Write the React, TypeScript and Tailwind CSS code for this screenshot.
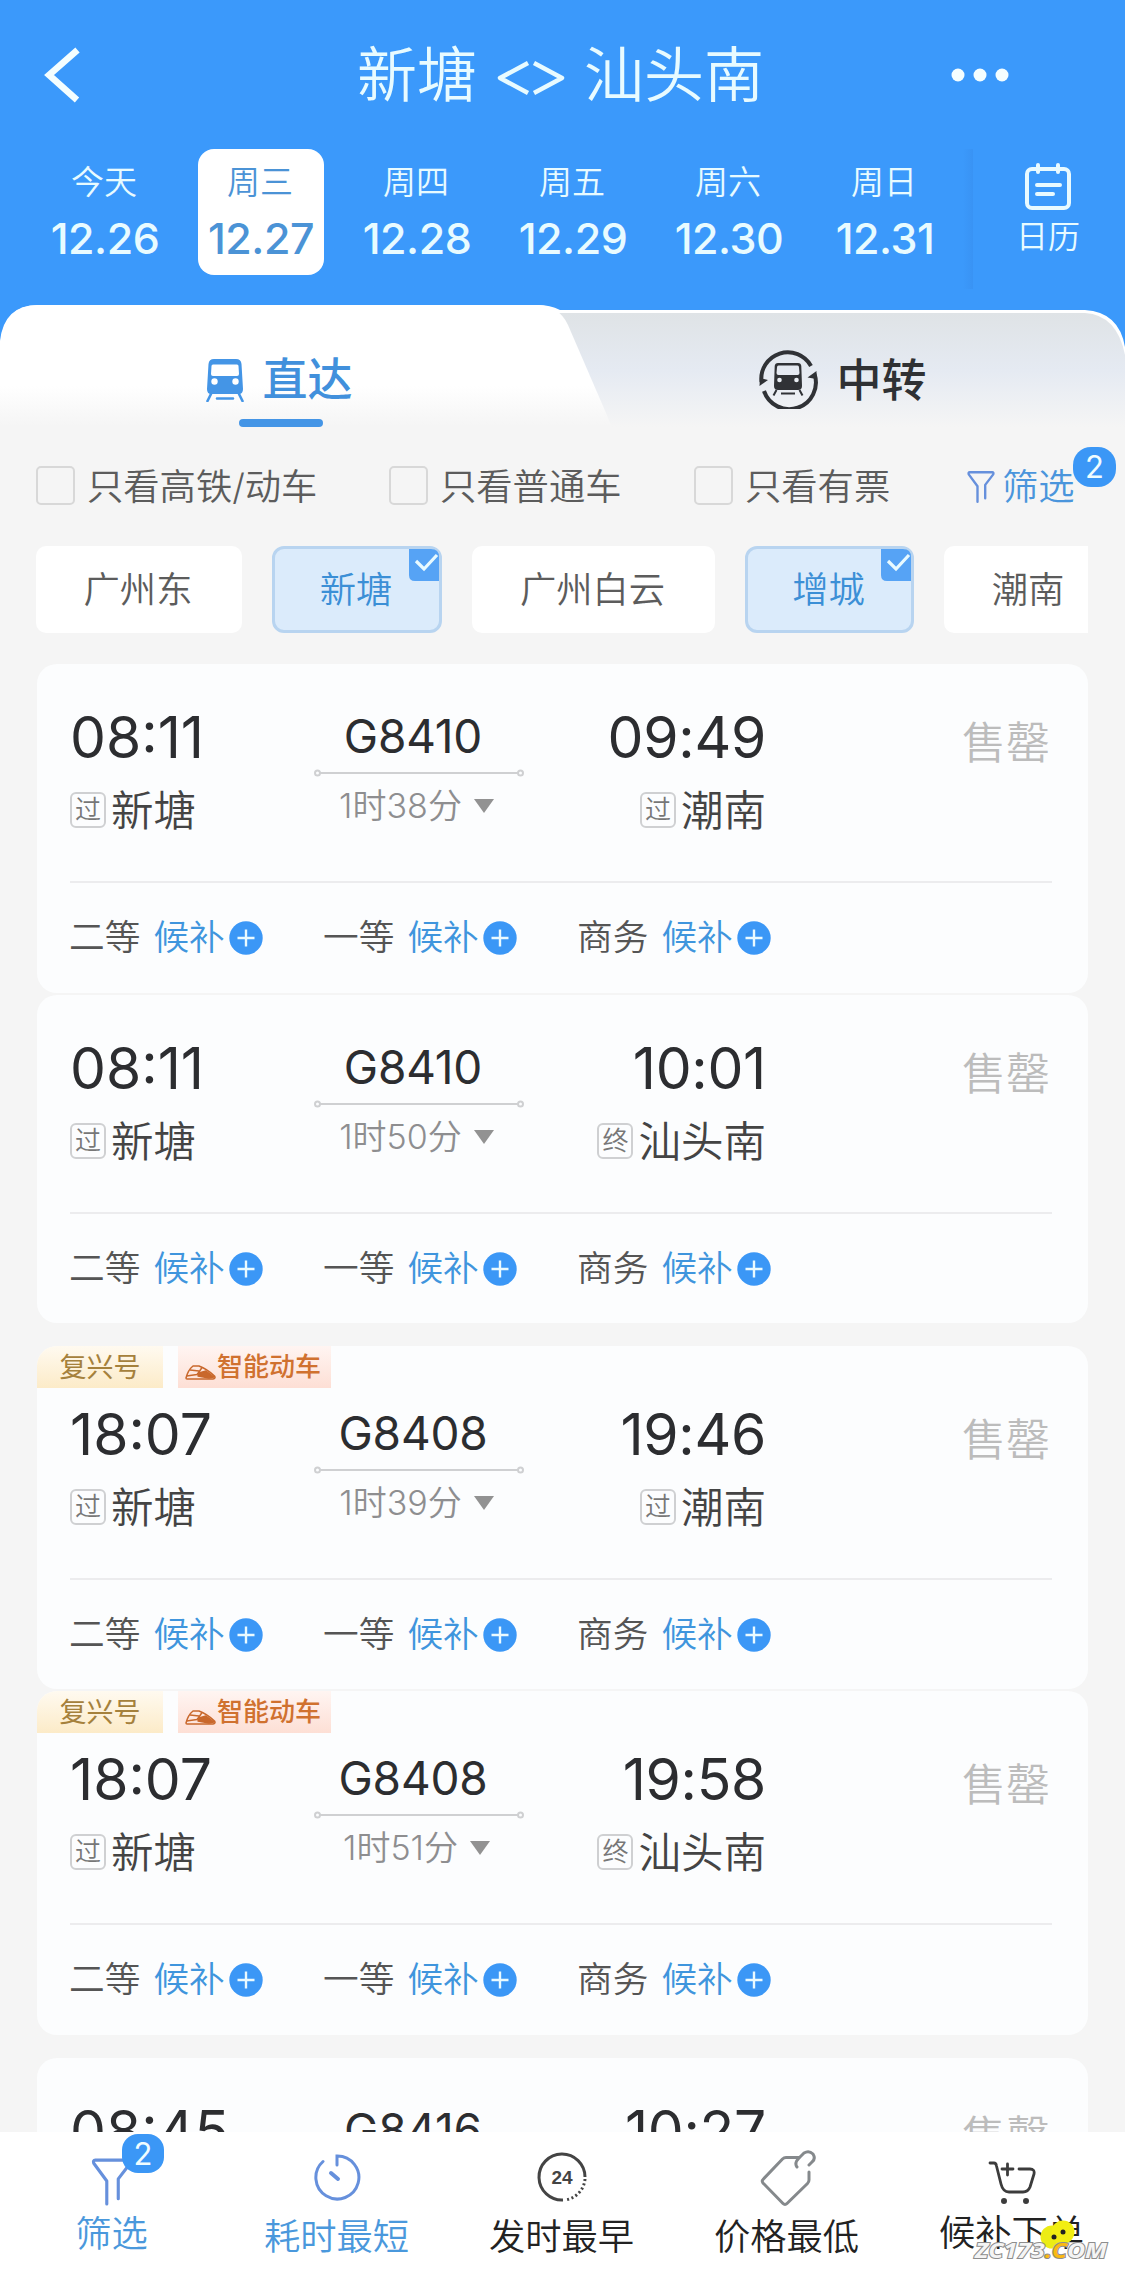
import type React from "react"

interface Day {
  label: string
  date: string
}

interface Train {
  depart: string
  arrive: string
  from: string
  to: string
  toBadge: string
  code: string
  duration: string
  tags?: boolean
  className: string
}

const days: Day[] = [
  { label: "今天", date: "12.26" },
  { label: "周三", date: "12.27" },
  { label: "周四", date: "12.28" },
  { label: "周五", date: "12.29" },
  { label: "周六", date: "12.30" },
  { label: "周日", date: "12.31" },
]

const trains: Train[] = [
  { depart: "08:11", arrive: "09:49", from: "新塘", to: "潮南", toBadge: "过", code: "G8410", duration: "1时38分", className: "h-[329px]" },
  { depart: "08:11", arrive: "10:01", from: "新塘", to: "汕头南", toBadge: "终", code: "G8410", duration: "1时50分", className: "mt-[2px] h-[328px]" },
  { depart: "18:07", arrive: "19:46", from: "新塘", to: "潮南", toBadge: "过", code: "G8408", duration: "1时39分", tags: true, className: "mt-[23px] h-[343px]" },
  { depart: "18:07", arrive: "19:58", from: "新塘", to: "汕头南", toBadge: "终", code: "G8408", duration: "1时51分", tags: true, className: "mt-[2px] h-[344px]" },
  { depart: "08:45", arrive: "10:27", from: "新塘", to: "潮南", toBadge: "过", code: "G8416", duration: "1时42分", className: "mt-[23px] h-[329px]" },
]

const seats = ["二等", "一等", "商务"]

const FunnelIcon: React.FC<{ className: string; strokeWidth: number }> = ({ className, strokeWidth }) => (
  <svg viewBox="0 0 40 46" className={className} fill="none" stroke="#6690dc" strokeWidth={strokeWidth} strokeLinecap="round" strokeLinejoin="round">
    <path d="M15 44V22L2.500 5Q1.500 2 4 2H36Q38.500 2 37.500 5L26 20V39" />
  </svg>
)

const TrainIcon: React.FC = () => (
  <svg viewBox="0 0 38 43" className="h-[43px] w-[38px]">
    <path fill="#4495e6" fillRule="evenodd" d="M8 0H30Q35 0 35.500 5L37 30Q37 35 33 35H5Q1 35 1 30L2.500 5Q3 0 8 0ZM7 5.500Q5.500 5.500 5.500 7L5 15Q5 17 7 17H31Q33 17 33 15L32.500 7Q32.500 5.500 31 5.500Z" />
    <circle cx="8.500" cy="22.500" r="3.200" fill="#fff" />
    <circle cx="29.500" cy="22.500" r="3.200" fill="#fff" />
    <path d="M5 35L1.500 42M33 35L36.500 42M11 39.500H27" stroke="#4495e6" strokeWidth="2.600" strokeLinecap="round" />
  </svg>
)

const TransferIcon: React.FC = () => (
  <svg viewBox="0 0 60 60" className="h-[60px] w-[60px]">
    <g fill="none" stroke="#303236" strokeWidth="4">
      <path d="M3.500 33A26.500 26.500 0 0 1 53 17" />
      <path d="M56.500 25A26.500 26.500 0 0 1 6 42" />
    </g>
    <path d="M2 29L10 31L1.500 37ZM58.500 22V30L49.500 28.500Z" fill="#303236" />
    <path fill="#303236" fillRule="evenodd" d="M20 14H40Q43 14 43.300 17L44 37Q44 41 40 41H20Q16 41 16 37L16.700 17Q17 14 20 14ZM20.500 16.500Q19 16.500 19 18.500L18.500 24Q18.500 26 20.500 26H39.500Q41.500 26 41.500 24L41 18.500Q41 16.500 39.500 16.500Z" />
    <circle cx="21.500" cy="31" r="2.300" fill="#e9edf3" />
    <circle cx="38.500" cy="31" r="2.300" fill="#e9edf3" />
    <path d="M18.500 41L15.500 46.500M41.500 41L44.500 46.500M23 44.500H37" stroke="#303236" strokeWidth="2" />
  </svg>
)

const PlusIcon: React.FC = () => (
  <svg viewBox="0 0 34 34" className="ml-[4px] h-[34px] w-[34px]">
    <circle cx="17" cy="17" r="16.700" fill="#3b97f6" />
    <path d="M8.500 17H25.500M17 8.500V25.500" stroke="#eafaff" strokeWidth="2.400" />
  </svg>
)

const StationBadge: React.FC<{ children: React.ReactNode }> = ({ children }) => (
  <span className="mt-[-3px] mr-[5px] flex h-[36px] w-[36px] items-center justify-center rounded-[6px] border-2 border-[#cfd0d2] text-[26px] leading-none text-[#777]">
    {children}
  </span>
)

const Header: React.FC = () => (
  <header className="h-[305px] text-[#e8fbff]">
    <div className="flex h-[149px] items-center">
      <svg viewBox="0 0 40 56" className="ml-[43px] h-[56px] w-[40px]">
        <path d="M34.500 3L6 28L34 53" fill="none" stroke="#f4feff" strokeWidth="6.500" />
      </svg>
      <h1 className="ml-[274px] flex h-[60px] w-[407px] items-center justify-between text-[60px] leading-none font-[350] whitespace-nowrap">
        <span>新塘</span>
        <svg viewBox="0 0 68 34" className="mt-[7px] h-[34px] w-[68px]" fill="none" stroke="#e8fbff" strokeWidth="4.500" strokeLinejoin="round">
          <path d="M31 2L3 17L31 32M37 2L65 17L37 32" />
        </svg>
        <span>汕头南</span>
      </h1>
      <svg viewBox="0 0 60 16" className="ml-[186px] h-[16px] w-[60px]" fill="#f4feff">
        <circle cx="8" cy="8" r="6.500" />
        <circle cx="30" cy="8" r="6.500" />
        <circle cx="52" cy="8" r="6.500" />
      </svg>
    </div>
    <div className="flex">
      <div className="flex pl-[27px]">
        {days.map((day) => (
          <div key={day.date} className="flex w-[156px] justify-center">
            <div
              className={
                day.date === "12.27"
                  ? "flex h-[126px] w-[126px] flex-col items-center rounded-[16px] bg-white text-[#4b93d6]"
                  : "flex h-[126px] w-[126px] flex-col items-center"
              }
            >
              <span className="mt-[15px] mr-[2px] text-[33px] leading-[36px] font-[350]">{day.label}</span>
              <span className="mt-[16px] text-[43px] leading-[44px] font-[450] tracking-[-0.5px]">{day.date}</span>
            </div>
          </div>
        ))}
      </div>
      <div className="h-[140px] w-[10px] bg-linear-to-r from-[#3b99fb] to-[#3993f4]" />
      <div className="flex w-[150px] flex-col items-center">
        <svg viewBox="0 0 48 48" className="mt-[14px] h-[48px] w-[48px]" fill="none" stroke="#e8faff" strokeWidth="4" strokeLinecap="round">
          <rect x="3" y="6" width="42" height="39" rx="5" />
          <path d="M14 2V9M34 2V9M13 22H36M13 31H29" />
        </svg>
        <span className="mt-[8px] text-[32px] leading-[36px] font-[350]">日历</span>
      </div>
    </div>
  </header>
)

const Tabs: React.FC = () => (
  <div className="relative flex h-[135px]">
    <svg viewBox="0 0 1125 135" className="absolute inset-0 h-[135px] w-[1125px]">
      <defs>
        <linearGradient id="idle" x1="0" y1="0" x2="0" y2="1">
          <stop offset="0" stopColor="#dfe3e6" />
          <stop offset="0.450" stopColor="#e5eaf2" />
          <stop offset="0.900" stopColor="#f5f5f5" />
        </linearGradient>
        <linearGradient id="active" x1="0" y1="0" x2="0" y2="1">
          <stop offset="0.600" stopColor="#fff" />
          <stop offset="0.900" stopColor="#f5f5f5" />
        </linearGradient>
      </defs>
      <path d="M0 135V36Q4 0 38 0H538Q550 0 560 5H1085Q1119 7 1125 42V135Z" fill="#fff" />
      <path d="M520 8H1085Q1117 10 1125 50V135H520Z" fill="url(#idle)" />
      <path d="M0 135V40Q4 0 38 0H535Q559 0 568 20L606 108L617 135Z" fill="url(#active)" />
    </svg>
    <div className="relative flex w-[562px] flex-col items-center">
      <div className="mt-[51px] mr-[3px] flex items-center text-[#4190dc]">
        <TrainIcon />
        <span className="ml-[18px] text-[45px] leading-[48px] font-[450]">直达</span>
      </div>
      <div className="mt-[15px] h-[8px] w-[84px] rounded-full bg-[#4495e6]" />
    </div>
    <div className="relative flex w-[563px] items-start justify-center pt-[44px] pr-[2px] text-[#2f3134]">
      <TransferIcon />
      <span className="mt-[8px] ml-[18px] text-[45px] leading-[48px] font-medium">中转</span>
    </div>
  </div>
)

const Checkbox: React.FC<{ label: string; className: string }> = ({ label, className }) => (
  <label className={className}>
    <span className="mr-[12px] h-[39px] w-[39px] rounded-[5px] border-2 border-[#d8d8d8]" />
    <span className="mt-[3px]">{label}</span>
  </label>
)

const Filters: React.FC = () => (
  <div className="flex h-[92px] items-center pl-[36px] text-[36.300px] leading-none font-[350] whitespace-nowrap text-[#5c5c5c]">
    <Checkbox label="只看高铁/动车" className="flex w-[353px] items-center" />
    <Checkbox label="只看普通车" className="flex w-[305px] items-center" />
    <Checkbox label="只看有票" className="flex w-[273px] items-center" />
    <div className="relative mt-[2px] flex items-center text-[#4a95dc]">
      <FunnelIcon className="h-[34px] w-[28px]" strokeWidth={3.4} />
      <span className="ml-[7px]">筛选</span>
      <span className="absolute top-[-22px] left-[106px] flex h-[40px] w-[43px] items-center justify-center rounded-[18px] bg-[#3b97f6] text-[31px] leading-none font-normal text-[#f0fdff]">
        2
      </span>
    </div>
  </div>
)

const Chip: React.FC<{ label: string; className: string; selected?: boolean }> = ({ label, className, selected }) => (
  <div className={className}>
    <span className="mt-[2px] mr-[2px]">{label}</span>
    {selected && (
      <svg viewBox="0 0 30 32" className="absolute top-0 right-0 h-[32px] w-[30px]">
        <path d="M0 0H22Q30 0 30 8V32H6Q0 32 0 26Z" fill="#56a3f5" />
        <path d="M7 12L15 20L28 6" fill="none" stroke="#e8faff" strokeWidth="3.200" />
      </svg>
    )}
  </div>
)

const Stations: React.FC = () => (
  <div className="mt-[14px] mr-[37px] ml-[36px] flex h-[87px] gap-[30px] overflow-hidden text-[36.300px] leading-none font-[350] whitespace-nowrap text-[#5c5c5c]">
    <Chip label="广州东" className="flex w-[206px] shrink-0 items-center justify-center rounded-[10px] bg-white" />
    <Chip label="新塘" selected className="relative flex w-[170px] shrink-0 items-center justify-center rounded-[12px] border-[3px] border-[#b8d4f0] bg-[#dbebfb] text-[#3b8fd6]" />
    <Chip label="广州白云" className="flex w-[243px] shrink-0 items-center justify-center rounded-[10px] bg-white" />
    <Chip label="增城" selected className="relative flex w-[169px] shrink-0 items-center justify-center rounded-[12px] border-[3px] border-[#b8d4f0] bg-[#dbebfb] text-[#3b8fd6]" />
    <Chip label="潮南" className="flex w-[170px] shrink-0 items-center justify-center rounded-[10px] bg-white" />
  </div>
)

const TrainTags: React.FC = () => (
  <div className="flex h-[42px] gap-[15px] leading-none">
    <span className="flex w-[126px] items-center justify-center rounded-tl-[14px] bg-linear-to-b from-[#fffaf0] to-[#fcebc8] text-[27px] text-[#a5813c]">
      复兴号
    </span>
    <span className="flex w-[153px] items-center bg-linear-to-b from-[#fff5f2] to-[#fddfd5] pl-[7px] text-[26px] font-[450] text-[#d0712f]">
      <svg viewBox="0 0 31 15" className="mt-[10px] h-[15px] w-[31px]" fill="none" stroke="#c9682c" strokeWidth="1.500" strokeLinejoin="round">
        <path d="M1 13Q3 5 8 1H14Q22 4 29.500 11Q31 13.500 28 14H2Q1 14 1 13Z" />
        <path d="M1.500 11L12 9.500L14 7L17 2.500M5 5L14 6" />
        <path d="M14 8L21 6L29 12L24 13L13 11Z" fill="#c9682c" />
      </svg>
      <span className="ml-px">智能动车</span>
    </span>
  </div>
)

const TrainCard: React.FC<{ train: Train }> = ({ train }) => (
  <article className={train.className}>
    <div className="flex h-full flex-col overflow-hidden rounded-[20px] bg-[#fcfdfe]">
      {train.tags && <TrainTags />}
      <div className={train.tags ? "mt-[17px] flex h-[173px] shrink-0 pl-[33px]" : "mt-[44px] flex h-[173px] shrink-0 pl-[33px]"}>
        <div className="w-[240px]">
          <div className="text-[57px] leading-[60px] text-[#2c2d30]">{train.depart}</div>
          <div className="mt-[21px] flex h-[44px] items-center text-[42.500px] leading-none font-[350] text-[#444]">
            <StationBadge>过</StationBadge>
            {train.from}
          </div>
        </div>
        <div className="w-[218px] pr-[8px] pl-[4px] text-center">
          <div className="mr-[8px] text-[46px] leading-[56px] tracking-[-0.2px] text-[#2c2d30]">{train.code}</div>
          <svg viewBox="0 0 210 10" className="mt-[4px] block h-[10px] w-[210px]" fill="none" stroke="#cfd0d2" strokeWidth="2">
            <circle cx="3.500" cy="5" r="2.500" />
            <circle cx="206.500" cy="5" r="2.500" />
            <path d="M6 5H204" />
          </svg>
          <div className="mt-[9px] flex h-[38px] items-center justify-center text-[34px] leading-none font-[350] text-[#8e8e90]">
            {train.duration}
            <svg viewBox="0 0 22 16" className="ml-[11px] h-[16px] w-[22px]" fill="#929292">
              <path d="M1 1H21L11 15Z" />
            </svg>
          </div>
        </div>
        <div className="w-[238px]">
          <div className="text-right text-[57px] leading-[60px] tracking-[-0.3px] text-[#2c2d30]">{train.arrive}</div>
          <div className="mt-[21px] flex h-[44px] items-center justify-end text-[42.500px] leading-none font-[350] text-[#444]">
            <StationBadge>{train.toBadge}</StationBadge>
            {train.to}
          </div>
        </div>
        <div className="mt-[13px] flex-1 pr-[38px] text-right text-[44px] leading-[44px] font-[350] text-[#bcbcbc]">售罄</div>
      </div>
      <div className="mr-[36px] ml-[33px] h-[2px] shrink-0 bg-[#ececee]" />
      <div className="mt-[37px] flex pl-[32px] text-[35.700px] leading-none font-[350]">
        {seats.map((seat) => (
          <div key={seat} className="flex w-[254px] items-center">
            <span className="text-[#555]">{seat}</span>
            <span className="ml-[13px] text-[#3f95dd]">候补</span>
            <PlusIcon />
          </div>
        ))}
      </div>
    </div>
  </article>
)

const BottomBar: React.FC = () => (
  <nav className="relative grid h-[140px] grid-cols-5 bg-white text-[36.300px] leading-[40px] font-[350] text-[#222]">
    <div className="relative flex flex-col items-center pr-[2px] text-[#4a98dc]">
      <FunnelIcon className="mt-[26px] h-[48px] w-[42px]" strokeWidth={3} />
      <span className="mt-[8px]">筛选</span>
      <span className="absolute top-[2px] left-[122px] flex h-[39px] w-[42px] items-center justify-center rounded-[16px] bg-[#3b97f6] text-[31px] leading-none font-normal text-[#f0fdff]">
        2
      </span>
    </div>
    <div className="flex flex-col items-center pr-[2px] text-[#4a98dc]">
      <svg viewBox="0 0 48 48" className="mt-[21px] h-[48px] w-[48px]" fill="none" stroke="#6690dc" strokeWidth="3" strokeLinecap="round">
        <path d="M24 12V3A21.500 21.500 0 1 1 10 8.500" />
        <path d="M18 20L25 26" strokeWidth="4" />
      </svg>
      <span className="mt-[16px]">耗时最短</span>
    </div>
    <div className="flex flex-col items-center pr-[2px]">
      <svg viewBox="0 0 50 50" className="mt-[20px] h-[50px] w-[50px]" fill="none" stroke="#444" strokeWidth="3">
        <path d="M26 48A23 23 0 1 1 48 25" />
        <path d="M48 27A23 23 0 0 1 28 48" strokeDasharray="2 2.500" />
        <text x="25" y="32" textAnchor="middle" fontSize="19" fontWeight="700" fill="#444" stroke="none" style={{ fontFamily: "Liberation Sans" }}>24</text>
      </svg>
      <span className="mt-[15px]">发时最早</span>
    </div>
    <div className="flex flex-col items-center pr-[2px]">
      <svg viewBox="0 0 56 58" className="mt-[17px] ml-[2px] h-[58px] w-[56px]" fill="none" stroke="#85898c" strokeWidth="3" strokeLinecap="round" strokeLinejoin="round">
        <path d="M39 8.500H26Q24 8.500 22.500 10L3 30.500Q1.500 32 3 34L23 54.500Q25 56.500 27 54.500L47.500 34.500Q49 33 49 31V23" />
        <path d="M37 18Q34 14 39 9L44 4Q49 1 53 5Q56 10 52 13L49 16" />
      </svg>
      <span className="mt-[10px]">价格最低</span>
    </div>
    <div className="flex flex-col items-center pr-[2px]">
      <svg viewBox="0 0 50 46" className="mt-[28px] h-[46px] w-[50px]" fill="none" stroke="#3c3c3c" strokeWidth="2.800" strokeLinecap="round" strokeLinejoin="round">
        <path d="M3 3H7Q9 3 9.500 6L14 24Q16 32 22 32H36Q41 32 43 27L47 14Q48 9 43 9H32" />
        <path d="M15 9H26M20.500 4V15" />
        <circle cx="17" cy="41" r="1.600" fill="#3c3c3c" />
        <circle cx="39" cy="41" r="1.600" fill="#3c3c3c" />
      </svg>
      <span className="mt-[7px]">候补下单</span>
    </div>
    <svg viewBox="0 0 150 60" className="absolute right-[5px] bottom-[4px] h-[60px] w-[150px] overflow-visible">
      <circle cx="82" cy="29" r="11.500" fill="#ecec14" />
      <circle cx="93" cy="24" r="11.500" fill="#f2ee12" />
      <circle cx="84" cy="29" r="2.500" fill="#222" />
      <circle cx="93" cy="24" r="2.500" fill="#222" />
      <text x="5" y="50" textLength="132" lengthAdjust="spacingAndGlyphs" fontSize="22" fontWeight="700" fontStyle="italic" fill="#f4f4f4" stroke="#8d8d8d" strokeWidth="2" paintOrder="stroke" style={{ fontFamily: "Open Sans" }}>
        ZC173<tspan fill="#fbb911">.C</tspan>OM
      </text>
    </svg>
  </nav>
)

export default function App() {
  return (
    <div className="flex h-[2272px] w-[1125px] flex-col overflow-hidden bg-[#f5f5f5] font-['Inter','Noto_Sans_CJK_SC',sans-serif]">
      <div className="shrink-0 bg-linear-to-b from-[#3b99fb] from-[355px] to-[#f5f5f5] to-[355px]">
        <Header />
        <Tabs />
      </div>
      <Filters />
      <Stations />
      <main className="mx-[37px] mt-[31px] min-h-0 flex-1 overflow-hidden">
        {trains.map((train) => (
          <TrainCard key={train.depart + train.arrive} train={train} />
        ))}
      </main>
      <BottomBar />
    </div>
  )
}
